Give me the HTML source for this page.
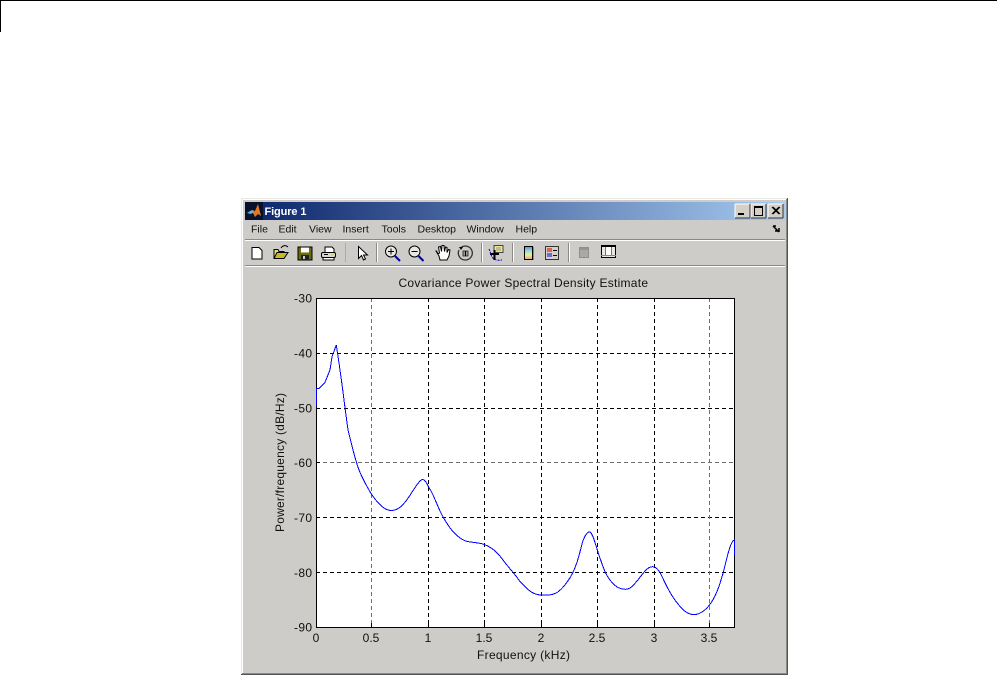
<!DOCTYPE html>
<html><head><meta charset="utf-8"><style>
html,body{margin:0;padding:0;background:#fff;width:997px;height:675px;overflow:hidden}
svg{display:block;font-family:"Liberation Sans",sans-serif}
.m{font-size:10.5px;fill:#111}
.t{font-size:12px;fill:#111}
</style></head><body>
<svg width="997" height="675" viewBox="0 0 997 675" shape-rendering="crispEdges">
<defs><linearGradient id="g" x1="0" x2="1" y1="0" y2="0"><stop offset="0" stop-color="#0a246a"/><stop offset="1" stop-color="#a6caf0"/></linearGradient>
<linearGradient id="cb" x1="0" x2="0" y1="0" y2="1"><stop offset="0" stop-color="#7d7ae0"/><stop offset=".35" stop-color="#8ee0d8"/><stop offset=".65" stop-color="#e8f090"/><stop offset="1" stop-color="#f0a080"/></linearGradient></defs>
<rect x="0" y="0" width="997" height="1" fill="#000"/>
<rect x="0" y="0" width="1" height="32" fill="#000"/>
<!-- window -->
<rect x="241" y="198" width="547" height="477" fill="#cdccc8"/>
<rect x="241" y="198" width="547" height="1" fill="#e8e7e4"/>
<rect x="241" y="198" width="1" height="477" fill="#e8e7e4"/>
<rect x="242" y="199" width="545" height="1" fill="#fff"/>
<rect x="242" y="199" width="1" height="475" fill="#fff"/>
<rect x="787" y="198" width="1" height="477" fill="#555"/>
<rect x="241" y="674" width="547" height="1" fill="#555"/>
<rect x="786" y="199" width="1" height="475" fill="#8a8985"/>
<rect x="242" y="673" width="545" height="1" fill="#8a8985"/>
<rect x="245" y="202" width="540" height="18" fill="url(#g)"/>
<!-- logo -->
<rect x="245" y="202" width="18" height="18" fill="#06122c"/>
<g shape-rendering="auto"><path d="M247 213 L252 210 L255 211 L258 204 L261 216 L258 214 L255 217 L253 213 Z" fill="#e8761e"/><path d="M247 213 L252 210 L254 212 L251 214 Z" fill="#58b8e0"/></g>
<text x="264.5" y="215" font-size="11" font-weight="bold" fill="#fff" textLength="42">Figure 1</text>
<!-- caption buttons -->
<g>
<rect x="735" y="204" width="15" height="14" fill="#d4d0c8"/><path d="M735 204h15M735 204v14" stroke="#fff"/><path d="M750 204v14M735 218h15" stroke="#333"/><rect x="738" y="213" width="6" height="2" fill="#000"/>
<rect x="751" y="204" width="15" height="14" fill="#d4d0c8"/><path d="M751 204h15M751 204v14" stroke="#fff"/><path d="M766 204v14M751 218h15" stroke="#333"/><rect x="754.500" y="206.500" width="8" height="9" fill="none" stroke="#000"/><rect x="754" y="206" width="9" height="2" fill="#000"/>
<rect x="768" y="204" width="15" height="14" fill="#d4d0c8"/><path d="M768 204h15M768 204v14" stroke="#fff"/><path d="M783 204v14M768 218h15" stroke="#333"/>
<path d="M772 207 L779 214 M773 207 L780 214 M779 207 L772 214 M780 207 L773 214" stroke="#000" shape-rendering="auto" stroke-width="1"/>
</g>
<!-- menu -->
<text class="m" x="251" y="232.500">File</text>
<text class="m" x="278.500" y="232.500">Edit</text>
<text class="m" x="309" y="232.500">View</text>
<text class="m" x="342.500" y="232.500">Insert</text>
<text class="m" x="381.500" y="232.500">Tools</text>
<text class="m" x="417.500" y="232.500">Desktop</text>
<text class="m" x="466.500" y="232.500">Window</text>
<text class="m" x="515.500" y="232.500">Help</text>
<path d="M773 226 L779 232 M773 226 h3 M779 232 v-4 M775 231 h4" stroke="#000" stroke-width="1.500" fill="none" shape-rendering="auto"/>
<rect x="245" y="239" width="540" height="1" fill="#8a8985"/><rect x="245" y="240" width="540" height="1" fill="#fff"/>
<rect x="245" y="265" width="540" height="1" fill="#8a8985"/><rect x="245" y="266" width="540" height="1" fill="#fff"/>
<!-- toolbar separators -->
<g fill="#8a8985"><rect x="345" y="243" width="1" height="19" opacity=".5"/><rect x="376" y="243" width="1" height="19"/><rect x="481" y="243" width="1" height="19"/><rect x="512" y="243" width="1" height="19"/><rect x="568" y="243" width="1" height="19"/></g>
<g fill="#fff"><rect x="377" y="243" width="1" height="19"/><rect x="482" y="243" width="1" height="19"/><rect x="513" y="243" width="1" height="19"/><rect x="569" y="243" width="1" height="19"/></g>
<g shape-rendering="auto">
<!-- new -->
<path d="M252 247.500h7l3 3v8.500h-10z" fill="#fff" stroke="#000"/>
<!-- open -->
<path d="M274 258.500v-9h4l1 2h5v7z" fill="#e8e070" stroke="#000"/><path d="M274 258.500l3-6h11l-4 6z" fill="#c8b830" stroke="#000"/><path d="M281 248c2-3 5-3 7-1" stroke="#000" fill="none"/>
<!-- save -->
<rect x="298" y="247" width="14" height="13" fill="#6b6b10" stroke="#000"/><rect x="301" y="247.500" width="8" height="5" fill="#fff"/><rect x="301" y="255" width="8" height="5" fill="#222"/><rect x="303" y="256" width="2" height="3" fill="#ccc"/>
<!-- print -->
<path d="M325 252v-5h7l2 2v3" fill="#fff" stroke="#000"/><rect x="321.500" y="252.500" width="14" height="5" rx="1.500" fill="#d8d8d0" stroke="#000"/><rect x="323" y="257.500" width="11" height="2.500" fill="#fff" stroke="#000"/><path d="M324 254.500h4" stroke="#000"/><rect x="331" y="254" width="3" height="1.500" fill="#e8d040"/>
<!-- arrow -->
<path d="M358.500 246.500v12l3-3 2 4.500 2-1-2-4h4z" fill="#fff" stroke="#000"/>
<!-- zoom in -->
<circle cx="391" cy="251.500" r="5.500" fill="#e8e8e4" stroke="#000"/><path d="M388 251.500h6M391 248.500v6" stroke="#000"/><path d="M395 256l5 5" stroke="#0000a0" stroke-width="2"/>
<!-- zoom out -->
<circle cx="414.500" cy="251.500" r="5.500" fill="#e8e8e4" stroke="#000"/><path d="M411.500 251.500h6" stroke="#000"/><path d="M418.500 256l5 5" stroke="#0000a0" stroke-width="2"/>
<!-- hand -->
<path d="M436 251l3 5 1 4h7l2-4 1-6-1.500-.5-1.500 3v-5l-1.500-.5-1 4.500-.5-6h-2l-.5 6-1-5-2 .5 1 6-1.500 1-1.500-3z" fill="#fff" stroke="#000" stroke-width="1"/>
<!-- rotate -->
<path d="M461 247.500a7 7 0 1 1-2 2.500" fill="none" stroke="#333" stroke-width="1.300"/><path d="M459 247l4 0-2 3z" fill="#000"/><rect x="463" y="251" width="5" height="5" fill="#999" stroke="#222" stroke-width=".8"/><path d="M465.500 251v5" stroke="#000"/>
<!-- data cursor -->
<rect x="494" y="245.500" width="9" height="7" fill="#f0e890" stroke="#444"/><path d="M496 248h5M496 250h5" stroke="#777" stroke-width=".7"/>
<path d="M490 254h9M494.500 250v10" stroke="#000" stroke-width="2"/><path d="M489 249c2 4 2 8 5 10 3 2 6 1 8 1" fill="none" stroke="#0000d0" stroke-dasharray="2 1"/>
</g>
<!-- colorbar -->
<rect x="524.500" y="246.500" width="8" height="13" fill="url(#cb)" stroke="#000" stroke-width="1"/><rect x="533" y="247" width="1" height="13" fill="#888"/>
<!-- legend -->
<rect x="545.500" y="246.500" width="13" height="13" fill="#d4d0c8" stroke="#333"/><rect x="547" y="248" width="5" height="4" fill="#e06060"/><rect x="547" y="253" width="5" height="4" fill="#6070e0"/><rect x="553" y="250" width="4" height="1" fill="#000"/><rect x="553" y="255" width="4" height="1" fill="#000"/>
<!-- plot tools -->
<rect x="579.500" y="247.500" width="9" height="10" fill="#a8a8a4" stroke="#8e8e8a"/><rect x="580" y="248" width="8" height="2" fill="#949490"/>
<rect x="601.500" y="245.500" width="14" height="12" fill="#e8e8e4" stroke="#000"/><rect x="601" y="245" width="15" height="2" fill="#000"/><rect x="601" y="255" width="15" height="1" fill="#888"/><path d="M605.500 247v8M611.500 247v8" stroke="#777"/><rect x="606" y="247" width="5" height="8" fill="#fff"/>
<!-- axes -->
<text x="398.500" y="287" class="t" textLength="249.500">Covariance Power Spectral Density Estimate</text>
<rect x="316" y="298" width="418" height="329" fill="#fff"/>
<g stroke="#000" stroke-dasharray="4 3" fill="none">
<path d="M428.500 298V627M484.500 298V627M541.500 298V627M597.500 298V627M654.500 298V627"/>
<path d="M316 353.500H734M316 408.500H734M316 517.500H734M316 572.500H734"/>
</g>
<g stroke="#6e6e6e" stroke-dasharray="4 3" fill="none">
<path d="M371.500 298V627M709.500 298V627M316 462.500H734"/>
</g>
<rect x="316.500" y="298.500" width="418" height="329" fill="none" stroke="#000"/>
<g stroke="#000"><path d="M316 353.500h4M316 408.500h4M316 462.500h4M316 517.500h4M316 572.500h4M371.500 627v-4M428.500 627v-4M484.500 627v-4M541.500 627v-4M597.500 627v-4M654.500 627v-4M709.500 627v-4"/></g>
<path fill="none" stroke="#0000ff" stroke-width="1" d="M316.700,406 L316.700,388.700 L319.300,388.300 L325,382.300 L330,370 L332,356.700 L336.300,345 L339.300,365 L342.300,386.700 L345.300,410 L348,430 Q353.3,451.7 356,460.8 Q358.7,470 361.5,475.8 Q364.3,481.7 368,488.3 Q371.7,495 375.8,500 Q380,505 383.3,507.5 Q386.7,510 390,510.4 Q393.3,510.7 396.3,509.5 Q399.3,508.3 403,504.5 Q406.7,500.7 410,495.3 Q413.3,490 416.3,485.7 Q419.3,481.5 421,480.2 Q422.7,479 424.3,480.2 Q426,481.5 427.2,484.1 Q428.3,486.7 430,489.3 Q431.7,492 434.2,497.6 Q436.7,503.3 439.2,509.2 Q441.7,515 445.8,521.6 Q450,528.3 453.3,532 Q456.7,535.7 460.8,538.5 Q465,541.3 469.2,541.8 Q473.3,542.3 479.2,543.2 Q485,544 490.8,547.8 Q496.7,551.7 501.7,558.3 Q506.7,565 511.7,570.8 Q516.7,576.7 518.3,579.2 Q520,581.7 525,586.7 Q530,591.7 534.2,593.5 Q538.3,595.3 545.8,595.2 Q553.3,595 557.5,592.2 Q561.7,589.3 565.8,583.8 Q570,578.3 572.5,573.3 Q575,568.3 577.2,561.7 Q579.3,555 581.3,546.7 Q583.3,538.3 586.2,534.3 Q589,530.3 590.8,532.7 Q592.7,535 595,542.5 Q597.3,550 599.5,556.7 Q601.7,563.3 604.2,569.7 Q606.7,576 610.8,581 Q615,586 618.3,587.7 Q621.7,589.3 625.5,589.3 Q629.3,589.3 633,585.5 Q636.7,581.7 640.8,576.2 Q645,570.7 647.5,568.7 Q650,566.7 652.5,566.7 Q655,566.7 657.5,569.2 Q660,571.7 663.3,579.2 Q666.7,586.7 670.8,593.7 Q675,600.7 680,606.5 Q685,612.3 689.5,613.8 Q694,615.3 697.8,614 Q701.7,612.7 705.5,609.3 Q709.3,606 713,599.7 Q716.7,593.3 720,583.3 Q723.3,573.3 725.8,562.5 Q728.3,551.7 730.3,546.2 Q732.3,540.7 734.3,540 L734.3,555"/>
<!-- tick labels -->
<g text-anchor="end">
<text x="312" y="302.500" class="t" textLength="18">-30</text>
<text x="312" y="357.500" class="t" textLength="18">-40</text>
<text x="312" y="412.500" class="t" textLength="18">-50</text>
<text x="312" y="467" class="t" textLength="18">-60</text>
<text x="312" y="522" class="t" textLength="18">-70</text>
<text x="312" y="577" class="t" textLength="18">-80</text>
<text x="312" y="631.500" class="t" textLength="18">-90</text>
</g>
<g text-anchor="middle">
<text x="316" y="642" class="t">0</text>
<text x="371" y="642" class="t">0.5</text>
<text x="428" y="642" class="t">1</text>
<text x="484" y="642" class="t">1.5</text>
<text x="541" y="642" class="t">2</text>
<text x="597" y="642" class="t">2.5</text>
<text x="654" y="642" class="t">3</text>
<text x="709" y="642" class="t">3.5</text>
</g>
<text x="477" y="659" class="t" textLength="93">Frequency (kHz)</text>
<text transform="translate(284,532) rotate(-90)" class="t" textLength="139">Power/frequency (dB/Hz)</text>
</svg>
</body></html>
